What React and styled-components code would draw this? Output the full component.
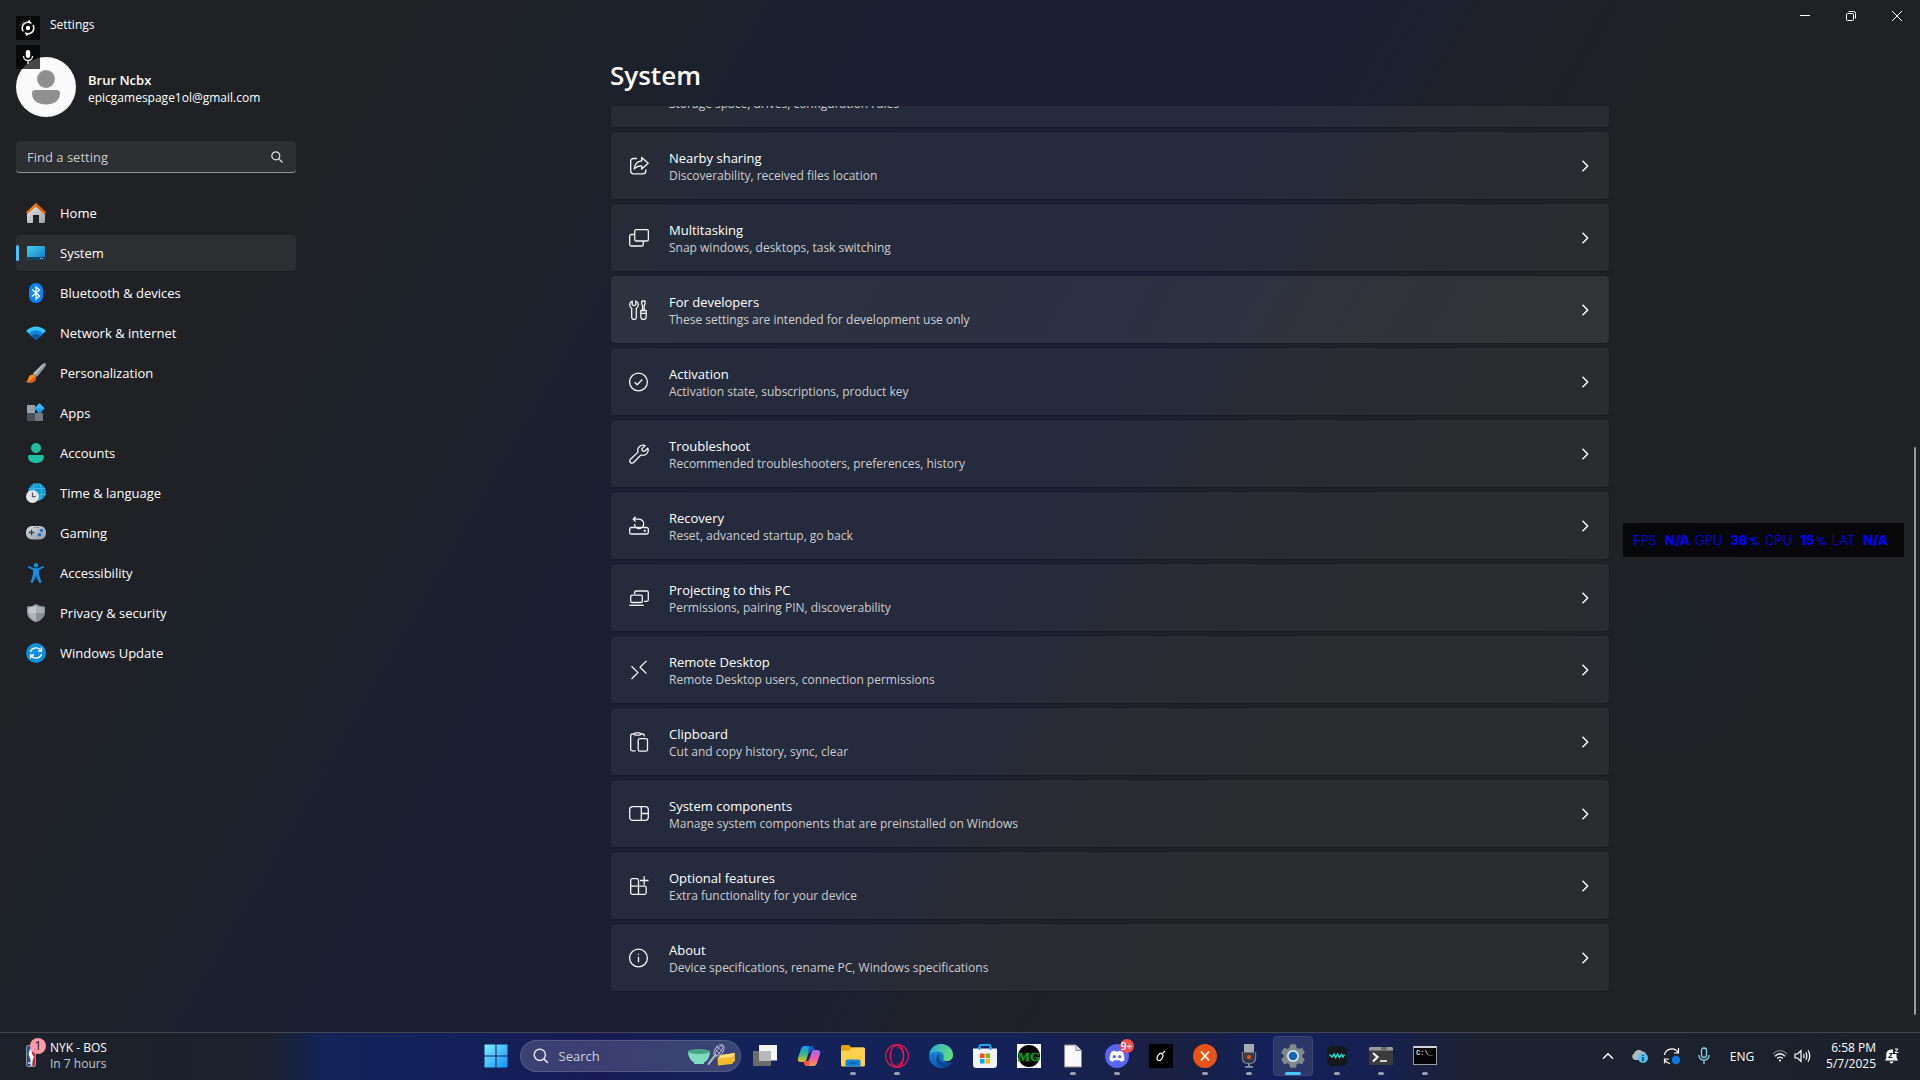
import styled, { createGlobalStyle } from "styled-components";
import { useState } from "react";

const navItems = [
    { name: "Home", icon: <HomeIcon /> },
    { name: "System", icon: <SystemIcon /> },
    { name: "Bluetooth & devices", icon: <BluetoothIcon /> },
    { name: "Network & internet", icon: <NetworkIcon /> },
    { name: "Personalization", icon: <BrushIcon /> },
    { name: "Apps", icon: <AppsIcon /> },
    { name: "Accounts", icon: <AccountsIcon /> },
    { name: "Time & language", icon: <TimeIcon /> },
    { name: "Gaming", icon: <GamingIcon /> },
    { name: "Accessibility", icon: <AccessibilityIcon /> },
    { name: "Privacy & security", icon: <ShieldIcon /> },
    { name: "Windows Update", icon: <UpdateIcon /> },
];

const cards = [
    {
        // scrolled under the heading, only its description shows
        desc: "Storage space, drives, configuration rules",
    },
    {
        title: "Nearby sharing",
        desc: "Discoverability, received files location",
        icon: (
            <>
                <path d="M8 2.5H4.5A2.8 2.8 0 0 0 1.7 5.300V15A2.800 2.800 0 0 0 4.500 17.800H14A2.800 2.800 0 0 0 16.800 15V13.500" />
                <path d="M12.700 1.500L19.200 7.300L12.700 13V9.800C9.500 9.600 7.300 10.600 5.200 12.800C5.700 8.300 8.200 5.200 12.700 4.800Z" />
            </>
        ),
    },
    {
        title: "Multitasking",
        desc: "Snap windows, desktops, task switching",
        icon: (
            <>
                <rect x="5.700" y="1.700" width="13.700" height="11.300" rx="1.500" />
                <path d="M5.700 6.500H2.200A1.500 1.500 0 0 0 .7 8V16.500A1.500 1.500 0 0 0 2.200 18H12.800A1.500 1.500 0 0 0 14.300 16.500V13" />
            </>
        ),
    },
    {
        title: "For developers",
        desc: "These settings are intended for development use only",
        hot: true,
        icon: (
            <>
                <path d="M3.200 1V4.800L5 5.800L6.800 4.800V1C8.500 1.800 9.400 3.300 9.300 5C9.200 6.500 8.400 7.700 7.300 8.400V17.200A2.300 2.300 0 0 1 2.700 17.200V8.400C1.500 7.700.8 6.500.7 5C.6 3.300 1.500 1.800 3.200 1Z" />
                <path d="M12.700 1H16V4L15.200 5.500V10.500M12.700 1V4L13.500 5.500V10.500" />
                <path d="M11.800 10.500H17.200V16.800A2.700 2.700 0 0 1 11.800 16.800ZM11.800 13.300H17.200" />
            </>
        ),
    },
    {
        title: "Activation",
        desc: "Activation state, subscriptions, product key",
        icon: (
            <>
                <circle cx="9.500" cy="10" r="8.900" />
                <path d="M5.700 10.300L8.200 12.800L13.300 7.500" />
            </>
        ),
    },
    {
        title: "Troubleshoot",
        desc: "Recommended troubleshooters, preferences, history",
        icon: (
            <path d="M16.200 1.600A5.300 5.300 0 0 0 9 8.100L1.500 15.300A2.200 2.200 0 0 0 4.600 18.500L11.900 11A5.300 5.300 0 0 0 18.800 4.200L15.600 7.300L13.300 6.900L12.900 4.700Z" />
        ),
    },
    {
        title: "Recovery",
        desc: "Reset, advanced startup, go back",
        icon: (
            <>
                <path d="M6 11.500H2.300A1.600 1.600 0 0 0 .7 13.100V16.400A1.600 1.600 0 0 0 2.300 18H17.700A1.600 1.600 0 0 0 19.300 16.400V13.100A1.600 1.600 0 0 0 17.700 11.500H14" />
                <path d="M7 11.500A4.700 4.700 0 1 0 10 3.200H4.500M6.700.8L4.200 3.200L6.700 5.600M7 11.500A4.700 4.700 0 0 1 5.500 8M7 11.500H13" />
                <circle cx="15.800" cy="14.800" r=".5" />
            </>
        ),
    },
    {
        title: "Projecting to this PC",
        desc: "Permissions, pairing PIN, discoverability",
        icon: (
            <>
                <path d="M5.700 6V4.500A1.500 1.500 0 0 1 7.200 3H17.800A1.500 1.500 0 0 1 19.300 4.500V11.800A1.500 1.500 0 0 1 17.800 13.300H15" />
                <rect x="1.700" y="7.200" width="11.600" height="7.300" rx="1.300" />
                <path d="M.3 17.300H14.700" />
            </>
        ),
    },
    {
        title: "Remote Desktop",
        desc: "Remote Desktop users, connection permissions",
        icon: <path d="M17.500.9L11 7.300L17.500 13.600M2.500 6.300L8.900 12.600L2.500 19" />,
    },
    {
        title: "Clipboard",
        desc: "Cut and copy history, sync, clear",
        icon: (
            <>
                <path d="M5.500 2H3.200A1.500 1.500 0 0 0 1.700 3.500V17.300A1.500 1.500 0 0 0 3.200 18.800H6.500M11.500 2H13.800A1.500 1.500 0 0 1 15.300 3.500V4.500" />
                <rect x="5.500" y=".8" width="6" height="2.400" rx="1.200" />
                <rect x="9.200" y="6.700" width="9.300" height="12.500" rx="1.500" />
            </>
        ),
    },
    {
        title: "System components",
        desc: "Manage system components that are preinstalled on Windows",
        icon: (
            <>
                <rect x=".7" y="2.700" width="18.600" height="13.600" rx="3" />
                <path d="M12.300 2.700V16.300M12.300 9.500H19.300" />
            </>
        ),
    },
    {
        title: "Optional features",
        desc: "Extra functionality for your device",
        icon: (
            <>
                <path d="M9.500 10.200H1.700V4.200A1.500 1.500 0 0 1 3.200 2.700H8A1.500 1.500 0 0 1 9.500 4.200V18.300H3.200A1.500 1.500 0 0 1 1.700 16.800V10.200M9.500 10.200H15.700A1.500 1.500 0 0 1 17.200 11.700V16.800A1.500 1.500 0 0 1 15.700 18.300H9.500" />
                <path d="M15.200.3V8.700M11 4.500H19.500" />
            </>
        ),
    },
    {
        title: "About",
        desc: "Device specifications, rename PC, Windows specifications",
        icon: (
            <>
                <circle cx="9.500" cy="10" r="8.900" />
                <path d="M9.500 8.800V14.300M9.500 5.800V6.700" />
            </>
        ),
    },
];

const stats = [
    { label: "FPS", value: "N/A" },
    { label: "GPU", value: "38", unit: "%" },
    { label: "CPU", value: "15", unit: "%" },
    { label: "LAT", value: "N/A" },
];

const taskApps = [
    { name: "Task view", icon: <TaskViewIcon /> },
    { name: "Copilot", icon: <CopilotIcon /> },
    { name: "File Explorer", icon: <ExplorerIcon />, open: true },
    { name: "Opera", icon: <OperaIcon />, open: true },
    { name: "Edge", icon: <EdgeIcon /> },
    { name: "Microsoft Store", icon: <StoreIcon /> },
    { name: "MG", icon: <MgIcon /> },
    { name: "Document", icon: <DocIcon />, open: true },
    { name: "Discord", icon: <DiscordIcon />, open: true, badge: "9+" },
    { name: "Game", icon: <BlackIcon /> },
    { name: "Launcher", icon: <OrangeIcon />, open: true },
    { name: "Recorder", icon: <RecorderIcon />, open: true },
    { name: "Settings", icon: <GearIcon />, open: true, active: true },
    { name: "Voice", icon: <WaveIcon />, open: true },
    { name: "Terminal", icon: <TerminalIcon />, open: true },
    { name: "Command Prompt", icon: <CmdIcon />, open: true },
];

const App = () => {
    const [page, setPage] = useState("System");
    const [query, setQuery] = useState("");

    return (
        <Desktop>
            <GlobalStyle />
            <Window>
                <TitleBar>
                    <AppName>Settings</AppName>
                    <Controls>
                        <ControlButton aria-label="Minimize">
                            <svg width="10" height="10" viewBox="0 0 10 10"><path d="M0 4.500H10" /></svg>
                        </ControlButton>
                        <ControlButton aria-label="Restore">
                            <svg width="10" height="10" viewBox="0 0 10 10">
                                <rect x=".5" y="2.500" width="7" height="7" rx="1" />
                                <path d="M2.500.5H7.500A2 2 0 0 1 9.500 2.500V7.500" />
                            </svg>
                        </ControlButton>
                        <ControlButton aria-label="Close">
                            <svg width="10" height="10" viewBox="0 0 10 10"><path d="M0 0L10 10M10 0L0 10" /></svg>
                        </ControlButton>
                    </Controls>
                </TitleBar>
                <Body>
                    <Sidebar>
                        <Profile>
                            <Avatar viewBox="0 0 60 60">
                                <circle cx="30" cy="30" r="30" fill="#fafafa" />
                                <circle cx="30" cy="22" r="9" fill="#8f8f8f" />
                                <path d="M19 33H41Q44 33 44 36.500C44 43.500 38 47.500 30 47.500S16 43.500 16 36.500Q16 33 19 33Z" fill="#8f8f8f" />
                            </Avatar>
                            <ProfileText>
                                <UserName>Brur Ncbx</UserName>
                                <Email>epicgamespage1ol@gmail.com</Email>
                            </ProfileText>
                        </Profile>
                        <SearchBox>
                            <SearchInput
                                aria-label="Find a setting"
                                placeholder="Find a setting"
                                value={query}
                                onChange={(e) => setQuery(e.target.value)}
                            />
                            <svg width="12" height="12" viewBox="0 0 12 12" fill="none" stroke="#e0e0e0" strokeWidth="1.200">
                                <circle cx="4.800" cy="4.800" r="4" />
                                <path d="M7.800 7.800L11.500 11.500" />
                            </svg>
                        </SearchBox>
                        <Nav>
                            {navItems.map((item) => (
                                <NavLink
                                    key={item.name}
                                    href="#"
                                    $active={page === item.name}
                                    onClick={() => setPage(item.name)}
                                >
                                    {item.icon}
                                    {item.name}
                                </NavLink>
                            ))}
                        </Nav>
                    </Sidebar>
                    <Main>
                        <Heading>System</Heading>
                        <CardList>
                            {cards.map((card) => (
                                <Card key={card.desc} $hot={card.hot}>
                                    <CardIcon viewBox="0 0 20 20">{card.icon}</CardIcon>
                                    <CardText>
                                        <CardTitle>{card.title}</CardTitle>
                                        <CardDesc>{card.desc}</CardDesc>
                                    </CardText>
                                    {card.title && (
                                        <Chevron viewBox="0 0 8 12"><path d="M1.500 .8L6.700 6L1.500 11.200" /></Chevron>
                                    )}
                                </Card>
                            ))}
                        </CardList>
                    </Main>
                </Body>
                <ScrollThumb />
            </Window>

            <Taskbar>
                <Widget>
                    <NbaIcon />
                    <WidgetBadge>1</WidgetBadge>
                    <WidgetText>
                        <span>NYK - BOS</span>
                        <WidgetSub>In 7 hours</WidgetSub>
                    </WidgetText>
                </Widget>
                <TaskCenter>
                    <TaskButton aria-label="Start"><StartIcon /></TaskButton>
                    <TaskSearch>
                        <svg width="16" height="16" viewBox="0 0 16 16" fill="none" stroke="#e4e6ee" strokeWidth="1.500">
                            <circle cx="6.800" cy="6.800" r="5.600" />
                            <path d="M10.900 10.900L15 15" />
                        </svg>
                        <TaskInput aria-label="Search" placeholder="Search" />
                        <BakingIcon />
                    </TaskSearch>
                    {taskApps.map((app) => (
                        <TaskButton key={app.name} aria-label={app.name} $open={app.open} $active={app.active}>
                            {app.icon}
                            {app.badge && <AppBadge>{app.badge}</AppBadge>}
                        </TaskButton>
                    ))}
                </TaskCenter>
                <Tray>
                    <TrayButton aria-label="Show hidden icons">
                        <svg width="12" height="8" viewBox="0 0 12 8" fill="none" stroke="#fff" strokeWidth="1.500"><path d="M1 6.700L6 1.700L11 6.700" /></svg>
                    </TrayButton>
                    <TrayButton aria-label="OneDrive"><CloudIcon /></TrayButton>
                    <TrayButton aria-label="Update"><SyncIcon /></TrayButton>
                    <TrayButton aria-label="Microphone">
                        <svg width="12" height="18" viewBox="0 0 12 18" fill="none" stroke="#8fd3ea" strokeWidth="1.300">
                            <rect x="3.500" y="1" width="5" height="9.500" rx="2.500" />
                            <path d="M.8 8A5.200 5.200 0 0 0 11.200 8M6 13.300V17" />
                        </svg>
                    </TrayButton>
                    <Language>ENG</Language>
                    <NetVolume aria-label="Network and volume"><WifiIcon /><VolumeIcon /></NetVolume>
                    <Clock>
                        <span>6:58 PM</span>
                        <span>5/7/2025</span>
                    </Clock>
                    <BellIcon />
                </Tray>
            </Taskbar>

            <CornerOverlay>
                <OverlayTile>
                    <svg width="18" height="18" viewBox="0 0 18 18" fill="none">
                        <path d="M.5 7L5 2" stroke="#555" />
                        <circle cx="9" cy="9" r="5.800" stroke="#f2f2f2" strokeWidth="1.600" strokeDasharray="16 2.200" strokeDashoffset="4" />
                        <circle cx="9" cy="9" r="2.200" fill="#fff" />
                        <path d="M8.500 2L11 1V4.500ZM9.500 16L7 17V13.500Z" fill="#fff" />
                    </svg>
                </OverlayTile>
                <OverlayTile>
                    <svg width="12" height="16" viewBox="0 0 12 16" fill="none">
                        <rect x="3.800" y="1" width="4.400" height="8" rx="2.200" fill="#fff" />
                        <path d="M1.500 7A4.500 4.500 0 0 0 10.500 7M6 11.500V15" stroke="#f2f2f2" strokeWidth="1.300" />
                    </svg>
                </OverlayTile>
            </CornerOverlay>
            <StatsOverlay>
                {stats.map((s) => (
                    <Stat key={s.label}>
                        {s.label}
                        <StatValue>{s.value}{s.unit && <StatUnit>{s.unit}</StatUnit>}</StatValue>
                    </Stat>
                ))}
            </StatsOverlay>
        </Desktop>
    );
};

/* ---------- sidebar icons ---------- */

function HomeIcon() {
    return (
        <svg width="20" height="20" viewBox="0 0 20 20">
            <defs>
                <linearGradient id="hg" x1="0" y1="0" x2="1" y2="1"><stop stopColor="#e8e8e8" /><stop offset="1" stopColor="#9e9e9e" /></linearGradient>
            </defs>
            <path d="M10 3L19 11V18.500Q19 20 17.500 20H13V12H7V20H2.500Q1 20 1 18.500V11Z" fill="url(#hg)" />
            <path d="M10 0L20 9.300L18.700 11L10 3.300L1.300 11L0 9.300Z" fill="#f07c12" />
            <path d="M10 0L20 9.300L18.700 11L10 3.300Z" fill="#db5a0c" />
        </svg>
    );
}

function SystemIcon() {
    return (
        <svg width="20" height="20" viewBox="0 0 20 20">
            <defs>
                <linearGradient id="sg" x1="0" y1="0" x2="1" y2="1"><stop stopColor="#3fd6e6" /><stop offset="1" stopColor="#1373c8" /></linearGradient>
            </defs>
            <rect x="1" y="3" width="18" height="14" rx="1" fill="url(#sg)" />
            <path d="M1 14H19V16Q19 17 18 17H2Q1 17 1 16Z" fill="#0a4668" />
            <path d="M14 15.500H15M16 15.500H17" stroke="#9fdcf0" />
        </svg>
    );
}

function BluetoothIcon() {
    return (
        <svg width="20" height="20" viewBox="0 0 20 20">
            <rect x="3" y="0" width="14" height="20" rx="7" fill="#0a84ff" />
            <path d="M6 6.500L13.500 13L10 16V4L13.500 7L6 13.500" fill="none" stroke="#fff" strokeWidth="1.300" />
        </svg>
    );
}

function NetworkIcon() {
    return (
        <svg width="20" height="20" viewBox="0 0 20 20">
            <path d="M0 8C5.500 2 14.500 2 20 8L10 17Z" fill="#35c5f4" />
            <path d="M2.700 10.500C7 6 13 6 17.300 10.500L10 17Z" fill="#1485dc" />
            <path d="M5.500 13C8.300 10.200 11.700 10.200 14.500 13L10 17Z" fill="#0b55a5" />
        </svg>
    );
}

function BrushIcon() {
    return (
        <svg width="20" height="20" viewBox="0 0 20 20">
            <path d="M19.500.3Q20.500 1.500 19 4L11 14L7 10.500L16 1.700Q18.500-.4 19.500.3Z" fill="#8f979e" />
            <path d="M19.500.3L9 12.500L7 10.500L16 1.700Q18.500-.4 19.500.3Z" fill="#b3bac0" />
            <path d="M8.500 12Q10.700 14 9.500 17C8 20 3.500 20.300 0 18.800Q2 17.800 2.300 15.500C3 11.800 6.500 10.700 8.500 12Z" fill="#f5922a" />
            <path d="M9.700 14.500C9.700 18.500 5 20.500 0 18.800Q6 18 7.500 14Z" fill="#e8551f" />
        </svg>
    );
}

function AppsIcon() {
    return (
        <svg width="20" height="20" viewBox="0 0 20 20">
            <path d="M1 2H9V10H1Z" fill="#9aa0a8" />
            <path d="M1 10H9V18H1Z" fill="#4c5157" />
            <path d="M9 10H17V18H9Z" fill="#737982" />
            <rect x="9.800" y="1.800" width="7.400" height="7.400" rx=".8" transform="rotate(45 13.500 5.500)" fill="#1c9cf0" />
            <path d="M13.500.3L8.500 5.500L13.500 5.500L18.500 5.500Z" fill="#3ab8f7" />
        </svg>
    );
}

function AccountsIcon() {
    return (
        <svg width="20" height="20" viewBox="0 0 20 20" fill="#1fbda2">
            <circle cx="10" cy="5" r="5" />
            <path d="M3.500 12H16.500Q18 12 18 13.500C18 18 14.500 20 10 20S2 18 2 13.500Q2 12 3.500 12Z" />
        </svg>
    );
}

function TimeIcon() {
    return (
        <svg width="20" height="20" viewBox="0 0 20 20" fill="none">
            <circle cx="11" cy="9" r="9" fill="#149bd3" />
            <path d="M3 5.500H19M2 11.500H20M8 .5Q5.500 9 9 17.500M14 .5Q17 9 13.500 17.500" stroke="#3fb9e0" />
            <circle cx="6.500" cy="13.500" r="6.500" fill="#e2e4e6" />
            <path d="M6.500 9.500V13.700H9.500" stroke="#555" strokeWidth="1.200" />
        </svg>
    );
}

function GamingIcon() {
    return (
        <svg width="20" height="20" viewBox="0 0 20 20">
            <defs>
                <linearGradient id="gg" x1="0" y1="0" x2="1" y2="1"><stop stopColor="#d8dbe0" /><stop offset="1" stopColor="#9198a1" /></linearGradient>
            </defs>
            <rect x="0" y="3" width="20" height="13.500" rx="6" fill="url(#gg)" />
            <path d="M5.500 6.800V12.200M2.800 9.500H8.200" stroke="#3b3f45" strokeWidth="1.300" />
            <path d="M8.500 4.500H9.500M11.500 4.500H12.500" stroke="#3b3f45" />
            <circle cx="15.500" cy="7.500" r="1.700" fill="#0f74d1" />
            <circle cx="13.500" cy="11.700" r="1.700" fill="#0f74d1" />
        </svg>
    );
}

function AccessibilityIcon() {
    return (
        <svg width="20" height="20" viewBox="0 0 20 20" fill="#178ee4">
            <circle cx="10" cy="2.300" r="2.300" />
            <path d="M3 3L8 5.200H12L17 3Q18.500 3.500 17.500 4.800L13 7V11.500L15.500 19Q14.500 20.500 13 19.500L10 13L7 19.500Q5.500 20.500 4.700 19L7 11.500V7L2.500 4.800Q1.500 3.500 3 3Z" />
        </svg>
    );
}

function ShieldIcon() {
    return (
        <svg width="20" height="20" viewBox="0 0 20 20">
            <path d="M10 1Q14 3.500 19 3.500V9C19 14 15.500 17.500 10 19.300C4.500 17.500 1 14 1 9V3.500Q6 3.500 10 1Z" fill="#8b9097" />
            <path d="M10 2.500V10H2.300V4.700Q6.500 4.600 10 2.500Z" fill="#c3c7cc" />
            <path d="M2.300 10H10V18Q3.500 15.500 2.300 10Z" fill="#b1b5bb" />
            <path d="M10 2.500V10H17.700V4.700Q13.500 4.600 10 2.500Z" fill="#a8acb3" />
        </svg>
    );
}

function UpdateIcon() {
    return (
        <svg width="20" height="20" viewBox="0 0 20 20" fill="none" stroke="#fff" strokeWidth="1.400">
            <circle cx="10" cy="10" r="10" fill="#0f8ee0" stroke="none" />
            <path d="M4.500 9C5.500 4.500 12 3.200 15.300 7.500M15.500 4.500V8H12M15.500 11C14.500 15.500 8 16.800 4.700 12.500M4.500 15.500V12H8" />
        </svg>
    );
}

/* ---------- taskbar icons ---------- */

function NbaIcon() {
    return (
        <svg width="10" height="22" viewBox="0 0 10 22">
            <rect width="10" height="22" rx="2.500" fill="#8f97a8" />
            <path d="M1 2.500Q1 1 2.500 1H5L4 7L6 12L4 21H2.500Q1 21 1 19.500Z" fill="#1d4d9f" />
            <path d="M6 1H7.500Q9 1 9 2.500V19.500Q9 21 7.500 21H6.500L7.500 14L5.500 8Z" fill="#cf2038" />
            <path d="M4 4Q6.500 5 5.500 8L8 12L6.500 14.500L5.500 21H5L4.500 15L2.500 9Z" fill="#fff" />
            <path d="M2 18H6" stroke="#dfe5f2" strokeWidth="1.500" />
        </svg>
    );
}

function StartIcon() {
    return (
        <svg width="24" height="24" viewBox="0 0 24 24">
            <defs>
                <linearGradient id="st" x1="0" y1="0" x2="1" y2="1"><stop stopColor="#83eefd" /><stop offset="1" stopColor="#0f93f5" /></linearGradient>
            </defs>
            <path d="M.5.5H11.500V11.500H.5ZM12.500.5H23.500V11.500H12.500ZM.5 12.500H11.500V23.500H.5ZM12.500 12.500H23.500V23.500H12.500Z" fill="url(#st)" />
        </svg>
    );
}

function BakingIcon() {
    return (
        <svg width="48" height="24" viewBox="0 0 48 24">
            <path d="M0 7H22C22 14 18.500 17.500 16 18.500V20H6V18.500C3 17 0 13 0 7Z" fill="#7fdcc0" />
            <ellipse cx="11" cy="7.500" rx="11" ry="2.500" fill="#48a487" />
            <path d="M20.500 20L27.500 11" stroke="#a9acc4" strokeWidth="2.200" strokeLinecap="round" />
            <g fill="none" stroke="#b9bbd2" strokeWidth=".9">
                <ellipse cx="31" cy="6.500" rx="4" ry="6.500" transform="rotate(38 31 6.500)" />
                <ellipse cx="31" cy="6.500" rx="1.800" ry="6.500" transform="rotate(38 31 6.500)" />
                <path d="M28 2L35 8M27 5L33 11" />
            </g>
            <path d="M29.500 14.500L33 11L47 9V16.500L44 20L30 21.500Z" fill="#f2b92f" />
            <path d="M29.500 14.500L33 11L47 9L44.500 12.800Z" fill="#ffdf80" />
        </svg>
    );
}

function TaskViewIcon() {
    return (
        <svg width="24" height="24" viewBox="0 0 24 24">
            <rect x="0" y="7" width="18" height="15" fill="#6b6b6e" />
            <rect x="6" y="1" width="18" height="15.500" fill="#f4f4f4" />
            <rect x="6" y="7" width="12" height="9.500" fill="#b9b9bb" />
        </svg>
    );
}

function CopilotIcon() {
    return (
        <svg width="24" height="24" viewBox="0 0 24 24">
            <defs>
                <linearGradient id="c1" x1="0" y1="0" x2="0" y2="1"><stop stopColor="#1a9bf0" /><stop offset=".5" stopColor="#2fb98b" /><stop offset="1" stopColor="#f2c21c" /></linearGradient>
                <linearGradient id="c2" x1="0" y1="0" x2="0" y2="1"><stop stopColor="#9f6bf2" /><stop offset=".55" stopColor="#ef5f9e" /><stop offset="1" stopColor="#ff9a4d" /></linearGradient>
            </defs>
            <path d="M7.500 2H14Q16 2 16.700 4.200L17.500 7H14Q12 7 11.300 9.500L9.500 15.500Q8.800 18 6.500 18H4Q0 18 1 14L4 5Q5 2 7.500 2Z" fill="url(#c1)" />
            <path d="M12 2H14Q16 2 16.700 4.200L17.500 7H14Q11.500 7 11 8Z" fill="#1759c9" />
            <path d="M16.500 22H10Q8 22 7.300 19.800L6.500 17H10Q12 17 12.700 14.500L14.500 8.500Q15.200 6 17.500 6H20Q24 6 23 10L20 19Q19 22 16.500 22Z" fill="url(#c2)" />
            <path d="M12 22H10Q8 22 7.300 19.800L6.500 17H10Q12.500 17 13 16Z" fill="#ee5a3f" />
        </svg>
    );
}

function ExplorerIcon() {
    return (
        <svg width="24" height="24" viewBox="0 0 24 24">
            <path d="M0 2.500Q0 1 1.500 1H8L10.500 3.500H22.500Q24 3.500 24 5V9H0Z" fill="#e3a008" />
            <path d="M0 6.500H8L10.500 3.500H22.500Q24 3.500 24 5V21Q24 22.500 22.500 22.500H1.500Q0 22.500 0 21Z" fill="#ffd04c" />
            <path d="M4.500 22.500V17.500Q4.500 15.500 6.500 15.500H17.500Q19.500 15.500 19.500 17.500V22.500Z" fill="#1584d8" />
            <path d="M8 19H16" stroke="#0c5fa8" strokeWidth="1.500" />
        </svg>
    );
}

function OperaIcon() {
    return (
        <svg width="24" height="24" viewBox="0 0 24 24" fill="none" stroke="#f0134f" strokeWidth="1.200">
            <circle cx="12" cy="12" r="11.300" />
            <ellipse cx="12" cy="12" rx="6.800" ry="10.800" />
            <path d="M12 3.500C20.500 3 20.500 21 12 20.500" />
        </svg>
    );
}

function EdgeIcon() {
    return (
        <svg width="24" height="24" viewBox="0 0 24 24">
            <defs>
                <linearGradient id="e1" x1="0" y1="0" x2="1" y2=".3"><stop stopColor="#2aa6e0" /><stop offset="1" stopColor="#5fdc7c" /></linearGradient>
                <linearGradient id="e2" x1="0" y1="0" x2="0" y2="1"><stop stopColor="#1f9de3" /><stop offset="1" stopColor="#0f55ad" /></linearGradient>
            </defs>
            <path d="M24 11C24 15 21 17 17.800 17C16 17 15 16.600 14.500 16C16 19 20 19.500 22.500 18.200C20.500 21.800 16.500 24 12 24A12 12 0 0 1 0 12C0 5 6 0 12 0S24 5 24 11Z" fill="url(#e2)" />
            <path d="M.3 10C1.500 3.500 6.500 0 12 0C19 0 24 5 24 11C24 15 21 17 17.800 17C15 17 13.800 16 14.200 14.800C15.500 13 15 8 9.500 7.500C5.500 7.200 1.500 8 .3 10Z" fill="url(#e1)" />
            <path d="M8.500 11.500C5 17 10 23.500 16 23.300C18.500 22.500 21 20.500 22.500 18.200C17 21 10 18.500 9.800 13Q9.800 11 11 9.500Q9.500 10 8.500 11.500Z" fill="#0b4a92" />
        </svg>
    );
}

function StoreIcon() {
    return (
        <svg width="24" height="24" viewBox="0 0 24 24">
            <path d="M6.500 6V2.500Q6.500 1 8 1H16Q17.500 1 17.500 2.500V6" fill="none" stroke="#22a7ee" strokeWidth="2" />
            <path d="M0 4.500H24V20.500Q24 24 20.500 24H3.500Q0 24 0 20.500Z" fill="#f2f2f2" />
            <path d="M6.500 3V6M17.500 3V6" stroke="#22a7ee" strokeWidth="2" />
            <path d="M7 9.500H11.500V14H7Z" fill="#f25022" />
            <path d="M12.500 9.500H17V14H12.500Z" fill="#7fba00" />
            <path d="M7 15H11.500V19.500H7Z" fill="#00a4ef" />
            <path d="M12.500 15H17V19.500H12.500Z" fill="#ffb900" />
        </svg>
    );
}

function MgIcon() {
    return (
        <svg width="24" height="24" viewBox="0 0 24 24">
            <rect width="24" height="24" fill="#fff" />
            <circle cx="12" cy="12" r="11" fill="#050505" />
            <text x="12" y="17" textAnchor="middle" fontFamily="'Liberation Serif', serif" fontWeight="700" fontSize="13" fill="#149914" stroke="#149914" strokeWidth=".5">MG</text>
        </svg>
    );
}

function DocIcon() {
    return (
        <svg width="24" height="24" viewBox="0 0 24 24">
            <path d="M3.500 1H15L20.500 6.500V23H3.500Z" fill="#f8f8f8" stroke="#8a8a8a" />
            <path d="M15 1V6.500H20.500" fill="#ddd" stroke="#8a8a8a" />
        </svg>
    );
}

function DiscordIcon() {
    return (
        <svg width="24" height="24" viewBox="0 0 24 24">
            <circle cx="12" cy="12" r="12" fill="#5865f2" />
            <path d="M8.500 7L9.500 6.500L10.200 7.500H13.800L14.500 6.500L15.500 7Q17.500 7.300 18 8.500Q19.800 12 19.500 16Q18 17.500 15.800 17.800L14.800 16.300H9.200L8.200 17.800Q6 17.500 4.500 16Q4.200 12 6 8.500Q6.500 7.300 8.500 7Z" fill="#fff" />
            <circle cx="9.300" cy="12.700" r="1.600" fill="#5865f2" />
            <circle cx="14.700" cy="12.700" r="1.600" fill="#5865f2" />
        </svg>
    );
}

function BlackIcon() {
    return (
        <svg width="24" height="24" viewBox="0 0 24 24" fill="none">
            <rect width="24" height="24" fill="#000" />
            <ellipse cx="11" cy="13" rx="2.400" ry="3.800" transform="rotate(30 11 13)" stroke="#fff" strokeWidth="1.200" />
            <path d="M10 9.500L14 9L16 7" stroke="#fff" strokeWidth="1.200" />
        </svg>
    );
}

function OrangeIcon() {
    return (
        <svg width="24" height="24" viewBox="0 0 24 24">
            <circle cx="12" cy="12" r="12" fill="#ea5318" />
            <path d="M8 7.500L16 16.500M16 7.500L8 16.500" stroke="#fff" strokeWidth="1.800" />
        </svg>
    );
}

function RecorderIcon() {
    return (
        <svg width="24" height="24" viewBox="0 0 24 24" fill="none">
            <path d="M7 0H17V10H7Z" fill="#a5abb2" />
            <path d="M5.500 8V14Q5.500 19.500 12 19.500T18.500 14V8" stroke="#73797f" strokeWidth="1.500" />
            <path d="M7 8.500H17V14Q17 17.500 12 17.500T7 14Z" fill="#3a3d41" />
            <circle cx="12" cy="13" r="2" fill="#e8541c" />
            <path d="M12 19.500V22M8 22.800H16" stroke="#8e949a" strokeWidth="1.800" />
        </svg>
    );
}

function GearIcon() {
    return (
        <svg width="24" height="24" viewBox="0 0 24 24">
            <path d="M9.700 1H14.300L15 4.300L17.500 5.700L20.700 4.600L23 8.600L20.500 10.800V13.400L23 15.500L20.700 19.500L17.500 18.400L15 19.800L14.300 23H9.700L9 19.800L6.500 18.400L3.300 19.500L1 15.500L3.500 13.400V10.800L1 8.600L3.300 4.600L6.500 5.700L9 4.300Z" fill="#7f888f" stroke="#7f888f" strokeWidth="1.500" strokeLinejoin="round" />
            <circle cx="12" cy="12" r="6" fill="#dfe6eb" />
            <circle cx="12" cy="12" r="4.300" fill="#1267b8" />
        </svg>
    );
}

function WaveIcon() {
    return (
        <svg width="24" height="24" viewBox="0 0 24 24" fill="none">
            <rect x="2" y="2" width="20" height="20" rx="5" fill="#16181c" />
            <path d="M4.500 10.500L7 13L9 10L10.500 13.500L12.500 10L14.500 13.500L16.500 10.500L18 13L19.500 10.500" stroke="#1ed7cf" strokeWidth="1.500" />
        </svg>
    );
}

function TerminalIcon() {
    return (
        <svg width="24" height="24" viewBox="0 0 24 24" fill="none">
            <rect x="0" y="3" width="24" height="18" rx="1.500" fill="#3b3b3b" />
            <path d="M0 6.500V4.500Q0 3 1.500 3H22.500Q24 3 24 4.500V6.500Z" fill="#9b9b9b" />
            <path d="M12 3H18V6.500H12Z" fill="#6d6d6d" />
            <path d="M4 9L8.500 13L4 17.500" stroke="#f2f2f2" strokeWidth="2.200" />
            <path d="M11 17H18" stroke="#f2f2f2" strokeWidth="1.700" />
        </svg>
    );
}

function CmdIcon() {
    return (
        <svg width="24" height="24" viewBox="0 0 24 24">
            <rect x=".5" y="2.500" width="23" height="18" fill="#050505" stroke="#9a9a9a" />
            <path d="M.5 3H23.500" stroke="#d5d5d5" strokeWidth="2" />
            <text x="3" y="11" fontFamily="'Liberation Mono', monospace" fontWeight="700" fontSize="7" fill="#ddd">C:\_</text>
        </svg>
    );
}

function CloudIcon() {
    return (
        <svg width="18" height="16" viewBox="0 0 18 16">
            <path d="M4 12A3.500 3.500 0 0 1 3 5.500A5 5 0 0 1 11.500 3.500A3.500 3.500 0 0 1 15 8V12Z" fill="#b4b7bb" />
            <circle cx="12" cy="10" r="5" fill="#55bdf0" />
            <path d="M12 9V13M12 7V8" stroke="#0b2438" strokeWidth="1.400" />
        </svg>
    );
}

function SyncIcon() {
    return (
        <svg width="18" height="18" viewBox="0 0 18 18" fill="none" stroke="#fff" strokeWidth="1.200">
            <path d="M1.500 8C2.500 1.500 11.500-.5 15 5.500M15.500 1V6H11M7 16.500Q3.500 16 1.700 12.500M6 12H1.500V16.500" />
            <circle cx="13" cy="13" r="4.200" fill="#0a7be0" stroke="none" />
        </svg>
    );
}

function WifiIcon() {
    return (
        <svg width="16" height="14" viewBox="0 0 16 14" fill="none" stroke="#fff" strokeWidth="1.300">
            <path d="M1 5Q8-2 15 5" stroke="#6b7078" />
            <path d="M3 7.300Q8 2.300 13 7.300M5.200 9.500Q8 6.800 10.800 9.500" />
            <circle cx="8" cy="11.500" r="1.100" fill="#fff" stroke="none" />
        </svg>
    );
}

function VolumeIcon() {
    return (
        <svg width="18" height="14" viewBox="0 0 18 14" fill="none" stroke="#fff" strokeWidth="1.200">
            <path d="M1 5V9H3.500L7 12.300V1.700L3.500 5ZM9.500 5Q10.700 7 9.500 9M11.700 3.200Q14 7 11.700 10.800M14 1.300Q17.500 7 14 12.700" />
        </svg>
    );
}

function BellIcon() {
    return (
        <svg width="16" height="16" viewBox="0 0 16 16">
            <path d="M2.300 7A4.700 4.700 0 0 1 7 1.500H9V6H12.500V9.500L14 12.500H1L2.300 10Z" fill="#fff" />
            <path d="M5.500 13.500H9.500Q9 15.500 7.500 15.500T5.500 13.500Z" fill="#fff" />
            <path d="M5 5.500H8L5 9.500H8.300" fill="none" stroke="#1b202b" strokeWidth="1.200" />
            <path d="M11 1H14L11 4.500H14.500" fill="none" stroke="#fff" />
        </svg>
    );
}

/* ---------- styles ---------- */

const GlobalStyle = createGlobalStyle`
    * {
        box-sizing: border-box;
    }
    body {
        margin: 0;
        background: #202124;
        color: #fff;
        font-family: 'Open Sans', 'Noto Sans', sans-serif;
        font-size: 13px;
    }
    button, input {
        font-family: inherit;
        font-size: inherit;
        color: inherit;
    }
    svg {
        flex: none;
    }
`;

const Desktop = styled.div`
    position: relative;
    display: flex;
    flex-direction: column;
    height: 100vh;
    overflow: hidden;
`;

const Window = styled.div`
    position: relative;
    flex: 1;
    min-height: 0;
    display: flex;
    flex-direction: column;
    background:
        radial-gradient(ellipse 7% 16% at 87% 62%, rgba(26, 34, 42, 0.6), transparent),
        linear-gradient(120deg, #202124 15%, #1d2129 23%, #1a2031 36%, #1a1f33 52%, #1f2029 62%, #202124 68%);
`;

const TitleBar = styled.header`
    display: flex;
    justify-content: space-between;
    padding-left: 50px;
`;

const AppName = styled.span`
    padding-top: 17px;
    font-size: 12px;
    line-height: 16px;
`;

const Controls = styled.div`
    display: flex;
    height: 32px;
`;

const ControlButton = styled.button`
    width: 46px;
    display: flex;
    align-items: center;
    justify-content: center;
    border: none;
    background: none;

    svg {
        fill: none;
        stroke: #fff;
    }
`;

const Body = styled.div`
    flex: 1;
    min-height: 0;
    display: flex;
`;

const Sidebar = styled.aside`
    width: 300px;
    padding: 24px 4px 0 16px;
`;

const Profile = styled.div`
    display: flex;
    align-items: center;
    gap: 12px;
`;

const Avatar = styled.svg`
    width: 60px;
    height: 60px;
`;

const ProfileText = styled.div`
    display: flex;
    flex-direction: column;
    padding-top: 2px;
`;

const UserName = styled.strong`
    font-weight: 600;
    line-height: 20px;
`;

const Email = styled.span`
    font-size: 12px;
    line-height: 16px;
`;

const SearchBox = styled.label`
    display: flex;
    align-items: center;
    height: 32px;
    margin: 24px 0 22px;
    padding: 0 13px 0 11px;
    border-bottom: 1px solid #9a9a9c;
    border-radius: 4px;
    background: #2d2e31;
`;

const SearchInput = styled.input`
    flex: 1;
    min-width: 0;
    padding: 0;
    border: none;
    outline: none;
    background: none;

    &::placeholder {
        color: #c8c8c9;
        opacity: 1;
    }
`;

const Nav = styled.nav`
    display: flex;
    flex-direction: column;
    gap: 4px;
`;

const NavLink = styled.a`
    position: relative;
    display: flex;
    align-items: center;
    gap: 14px;
    height: 36px;
    padding-left: 10px;
    border-radius: 4px;
    background: ${props => props.$active ? '#2d2e31' : 'transparent'};
    color: #fff;
    line-height: 20px;
    text-decoration: none;

    &::before {
        content: "";
        display: ${props => props.$active ? 'block' : 'none'};
        position: absolute;
        left: 0;
        width: 3px;
        height: 16px;
        border-radius: 2px;
        background: #4cc2ff;
    }
`;

const Main = styled.main`
    flex: 1;
    min-width: 0;
    display: flex;
    flex-direction: column;
    align-items: center;
    padding: 24px 20px 0;
`;

const Heading = styled.h1`
    width: 100%;
    max-width: 1000px;
    margin: 0;
    font-size: 26px;
    font-weight: 600;
    line-height: 36px;
    padding-bottom: 13px;
`;

const CardList = styled.div`
    flex: 1;
    min-height: 0;
    width: 100%;
    max-width: 1000px;
    display: flex;
    flex-direction: column;
    justify-content: flex-end;
    gap: 3px;
    padding-bottom: 40px;
    overflow: hidden;
`;

const Card = styled.button`
    flex: none;
    display: flex;
    align-items: center;
    gap: 20px;
    height: 69px;
    padding: 0 20px 0 18px;
    border: 1px solid rgba(0, 0, 0, 0.1);
    border-radius: 5px;
    background: ${props => props.$hot ? 'rgba(255, 255, 255, 0.084)' : 'rgba(255, 255, 255, 0.051)'};
    background-clip: padding-box;
    text-align: left;
`;

const CardIcon = styled.svg`
    width: 20px;
    height: 20px;
    fill: none;
    stroke: #f4f4f5;
    stroke-width: 1.3;
    stroke-linejoin: round;
`;

const CardText = styled.span`
    flex: 1;
    display: flex;
    flex-direction: column;
`;

const CardTitle = styled.span`
    min-height: 20px;
    line-height: 20px;
`;

const CardDesc = styled.span`
    font-size: 12px;
    line-height: 16px;
    color: #cccdd1;
`;

const Chevron = styled.svg`
    width: 8px;
    height: 12px;
    fill: none;
    stroke: #fff;
    stroke-width: 1.4;
`;

const ScrollThumb = styled.div`
    position: absolute;
    right: 4px;
    top: 447px;
    bottom: 17px;
    width: 2px;
    border-radius: 1px;
    background: #9a9b9c;
`;

const Taskbar = styled.footer`
    display: grid;
    grid-template-columns: 1fr auto 1fr;
    align-items: center;
    height: 48px;
    box-shadow: inset 0 1px #43464d;
    background: linear-gradient(90deg, #1c212b 0, #1b212d 14%, #12245a 17%, #14205a 25%, #171a55 31%, #14225a 38%, #14225a 52%, #1a2040 61%, #14205a 66%, #172050 72%, #1c2230 77%, #1b202b 100%);
`;

const Widget = styled.div`
    position: relative;
    display: flex;
    align-items: center;
    gap: 14px;
    padding-left: 26px;
`;

const WidgetBadge = styled.span`
    position: absolute;
    left: 30px;
    top: -2px;
    width: 16px;
    height: 16px;
    border-radius: 50%;
    background: #ff99a4;
    color: #111;
    font-size: 12px;
    line-height: 16px;
    text-align: center;
`;

const WidgetText = styled.span`
    display: flex;
    flex-direction: column;
    font-size: 12px;
    line-height: 16px;
`;

const WidgetSub = styled.span`
    color: #c4c7cd;
`;

const TaskCenter = styled.div`
    display: flex;
    align-items: center;
    gap: 4px;
`;

const TaskButton = styled.button`
    position: relative;
    display: flex;
    align-items: center;
    justify-content: center;
    width: 40px;
    height: 40px;
    padding: 0;
    border: 1px solid ${props => props.$active ? 'rgba(255, 255, 255, 0.08)' : 'transparent'};
    border-radius: 4px;
    background: ${props => props.$active ? 'rgba(255, 255, 255, 0.1)' : 'none'};

    &::after {
        content: "";
        display: ${props => props.$open ? 'block' : 'none'};
        position: absolute;
        bottom: 0;
        width: ${props => props.$active ? '16px' : '6px'};
        height: 3px;
        border-radius: 2px;
        background: ${props => props.$active ? '#4cc2ff' : '#9a9db0'};
    }
`;

const AppBadge = styled.span`
    position: absolute;
    top: 2px;
    right: 2px;
    width: 14px;
    height: 14px;
    border-radius: 50%;
    background: #f04d4d;
    color: #fff;
    font-size: 10px;
    font-weight: 600;
    line-height: 14px;
    text-align: center;
`;

const TaskSearch = styled.label`
    display: flex;
    align-items: center;
    gap: 10px;
    width: 221px;
    height: 32px;
    padding: 0 4px 0 12px;
    border: 1px solid rgba(255, 255, 255, 0.13);
    border-radius: 16px;
    background: rgba(255, 255, 255, 0.16);
`;

const TaskInput = styled.input`
    flex: 1;
    min-width: 0;
    padding: 0;
    border: none;
    outline: none;
    background: none;

    &::placeholder {
        color: #cdd0de;
        opacity: 1;
    }
`;

const Tray = styled.div`
    display: flex;
    align-items: center;
    justify-content: flex-end;
    padding-right: 20px;
`;

const TrayButton = styled.button`
    display: flex;
    align-items: center;
    justify-content: center;
    width: 32px;
    height: 40px;
    padding: 0;
    border: none;
    background: none;
`;

const Language = styled.button`
    width: 44px;
    padding: 0;
    border: none;
    background: none;
    font-size: 12px;
`;

const NetVolume = styled.button`
    display: flex;
    align-items: center;
    gap: 6px;
    padding: 0 8px;
    border: none;
    background: none;
`;

const Clock = styled.div`
    display: flex;
    flex-direction: column;
    align-items: flex-end;
    padding: 0 8px 0 6px;
    font-size: 12px;
    line-height: 16px;
`;

const CornerOverlay = styled.div`
    position: absolute;
    left: 16px;
    top: 16px;
    display: flex;
    flex-direction: column;
    gap: 5px;
`;

const OverlayTile = styled.div`
    display: flex;
    align-items: center;
    justify-content: center;
    width: 24px;
    height: 24px;
    background: rgba(0, 0, 0, 0.72);
`;

const StatsOverlay = styled.div`
    position: absolute;
    right: 16px;
    top: 523px;
    display: flex;
    align-items: center;
    justify-content: space-between;
    width: 281px;
    height: 34px;
    padding: 0 16px 0 10px;
    background: #070708;
    color: #0000ff;
    font-family: 'Inter', sans-serif;
    font-size: 13px;
    font-weight: 300;
`;

const Stat = styled.span`
    display: flex;
    align-items: baseline;
    gap: 8px;
`;

const StatValue = styled.span`
    font-weight: 800;
`;

const StatUnit = styled.span`
    padding-left: 2px;
    font-size: 10px;
`;

export default App;
